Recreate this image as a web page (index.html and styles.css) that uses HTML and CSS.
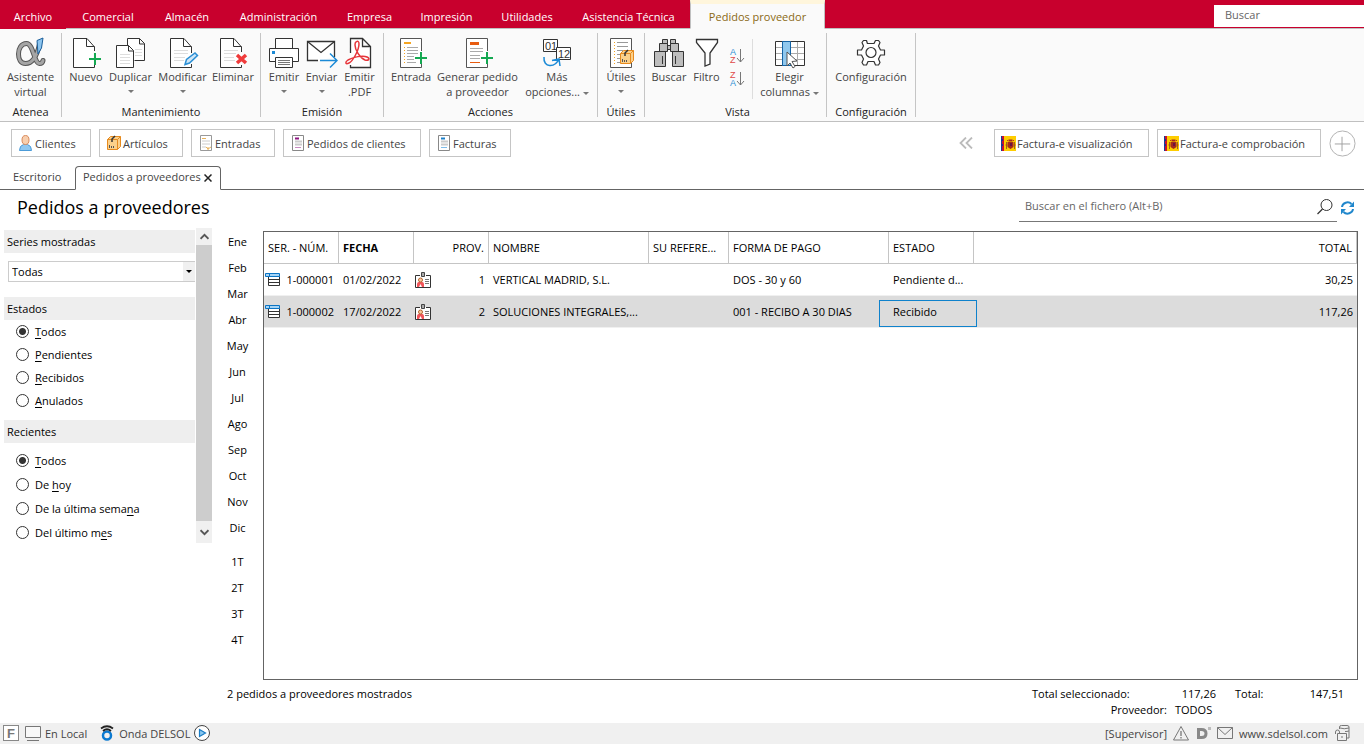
FILE: index.html
```html
<!DOCTYPE html>
<html lang="es">
<head>
<meta charset="utf-8">
<title>Pedidos a proveedores</title>
<link rel="stylesheet" href="styles.css">
</head>
<body>
<svg class="defs" aria-hidden="true">
  <symbol id="plus" viewBox="0 0 12 12"><path d="M6 0v12M0 6h12" stroke="#14a851" stroke-width="2"/></symbol>
  <symbol id="menu-row" viewBox="0 0 16 14">
    <path d="M3.500 3.500h11v9h-11zM3.500 6.500h11M3.500 9.500h11" fill="#fff" stroke="#333"/>
    <path d="M.5 .5h14v3H.5zM4.500 .5v3" fill="#a6d4f5" stroke="#0b74c4"/>
  </symbol>
  <symbol id="card" viewBox="0 0 16 16">
    <path d="M.5 3.500h15v12H.5z" fill="#fff" stroke="#333"/>
    <path d="M5 3h6v1H5z" fill="#fff"/>
    <path d="M6.500 .5h3v4h-3z" fill="#aaa" stroke="#444"/>
    <path d="M2 15v-3q0-1.500 1.500-2h4q1.500 .5 1.500 2v3z" fill="#f0555a"/>
    <circle cx="5.500" cy="8" r="2" fill="#f9c9a0" stroke="#b5652d"/>
    <path d="M4 15l1.500-3 1.500 3" fill="#fff"/>
    <path d="M10 7.500h4M10 9.500h4M10 11.500h4" stroke="#777"/>
  </symbol>
  <symbol id="flag" viewBox="0 0 15 15">
    <path d="M0 0h15v15H0z" fill="#fecd00"/>
    <path d="M0 0h1v15H0z" fill="#123c9c"/><path d="M1 0h2v15H1z" fill="#c8102e"/><path d="M0 3h2v2H0zM0 8h2v2H0z" fill="#203090"/>
    <path d="M5 6h1v7H5zM13 6h1v7h-1z" fill="#9a6a1c"/>
    <path d="M7.500 3.500h4v2h-4zM6.500 6h6v5l-3 2-3-2z" fill="#a52a1c"/>
    <path d="M9 7h2v3H9z" fill="#6a1440"/><path d="M4.500 9h2M12.500 9h2M6 4.500h1M12 4.500h1" stroke="#b3401c"/>
  </symbol>
  <symbol id="box" viewBox="0 0 16 16">
    <path d="M1.500 4.500l3-3h10v10l-3 3h-10z" fill="#fbd08a" stroke="#e68a1e"/>
    <path d="M1.500 4.500h10v10M11.500 4.500l3-3" fill="none" stroke="#e68a1e"/>
    <path d="M6 7V4l3-3" fill="none" stroke="#333" stroke-width="1.500"/>
    <path d="M3.500 10v3M5.500 11v2M7.500 11v2" stroke="#555"/>
  </symbol>
</svg>

<div class="app">
  <header>
    <nav class="menubar">
      <a class="menu menu-file" href="#">Archivo</a><a class="menu" href="#">Comercial</a><a class="menu" href="#">Almacén</a><a class="menu" href="#">Administración</a><a class="menu" href="#">Empresa</a><a class="menu" href="#">Impresión</a><a class="menu" href="#">Utilidades</a><a class="menu" href="#">Asistencia Técnica</a><a class="menu menu-active" href="#">Pedidos proveedor</a>
      <span class="menu menu-rest"></span>
      <input class="global-search" type="text" placeholder="Buscar" aria-label="Buscar">
    </nav>

    <div class="ribbon">
      <section class="group g-atenea">
        <div class="tools">
          <button class="tool">
            <svg class="icon" viewBox="0 0 32 32"><g fill="none" stroke-linecap="round"><path d="M24.500 7C22 19 17 26.500 10.500 26.500C5.500 26.500 3.500 22 3.500 17S6 6.500 11.500 6.500C18.500 6.500 19 26.500 24.500 26.500Q27.500 26.500 28 23.500" stroke="#555" stroke-width="5"/><path d="M24.500 7C22 19 17 26.500 10.500 26.500C5.500 26.500 3.500 22 3.500 17S6 6.500 11.500 6.500C18.500 6.500 19 26.500 24.500 26.500Q27.500 26.500 28 23.500" stroke="#a5a5a5" stroke-width="3"/></g><path d="M22 3.500l6-2.500-1.500 10-3.500 6z" fill="#8cc5ef" stroke="#1b5f9b"/></svg>
            <span>Asistente<br>virtual</span></button>
        </div>
        <h2>Atenea</h2>
      </section>

      <section class="group g-mant">
        <div class="tools">
          <button class="tool">
            <svg class="icon" viewBox="0 0 32 32"><path d="M24.500 14V10l-7.500-8.500H3.500v29h21V27M16.500 1.500V9.500h8" fill="#fff" stroke="#333"/><path d="M23 14h3v13h-3z" fill="#fafafa"/><use href="#plus" x="19" y="16" width="12" height="12"/></svg>
            <span>Nuevo</span></button>
          <button class="tool">
            <svg class="icon" viewBox="0 0 32 32"><path d="M12.500 8V1.500h12l5 5v17h-10M24.500 1.500V7h5" fill="#fff" stroke="#333"/><path d="M1.500 8.500h12l5 5v17h-17zM13.500 8.500V14h5" fill="#fff" stroke="#333"/><path d="M5 17.500h10M5 20.500h10M5 23.500h10M5 26.500h10M20 12.500h7M20 15.500h7M20 18.500h7" stroke="#ddd"/></svg>
            <span>Duplicar</span><i class="caret"></i></button>
          <button class="tool">
            <svg class="icon" viewBox="0 0 32 32"><path d="M24.500 16V10l-7.500-8.500H3.500v29h21V27M16.500 1.500V9.500h8" fill="#fff" stroke="#333"/><path d="M7 13.500h14M7 16.500h14M7 20.500h11M7 23.500h10" stroke="#ddd"/><path d="M18 27.500l1.500-5 8.500-6.500 2.500 2.500-8 7.500z" fill="#cfe6f7" stroke="#2b8fd4" stroke-width="1.500"/></svg>
            <span>Modificar</span><i class="caret"></i></button>
          <button class="tool">
            <svg class="icon" viewBox="0 0 32 32"><path d="M24.500 15V10l-7.500-8.500H3.500v29h21V28M16.500 1.500V9.500h8" fill="#fff" stroke="#333"/><path d="M7 13.500h14M7 16.500h12M7 20.500h10M7 23.500h11" stroke="#ddd"/><path d="M20 18l9 8M29 18l-9 8" stroke="#f03b3b" stroke-width="3.500"/></svg>
            <span>Eliminar</span></button>
        </div>
        <h2>Mantenimiento</h2>
      </section>

      <section class="group g-emi">
        <div class="tools">
          <button class="tool">
            <svg class="icon" viewBox="0 0 32 32"><path d="M7.500 11V1.500h17V11M8 24.500H1.500v-13h29v13H24" fill="#fff" stroke="#333"/><path d="M7.500 20.500h17v10h-17z" fill="#fff" stroke="#333"/><path d="M10 23.500h12M10 25.500h12M10 27.500h12" stroke="#777"/><path d="M4 14h3v3H4z" fill="#1b8ad6"/></svg>
            <span>Emitir</span><i class="caret"></i></button>
          <button class="tool">
            <svg class="icon" viewBox="0 0 32 32"><path d="M12 23.500H1.500v-19h27V20" fill="#fff" stroke="#333" stroke-width="1.300"/><path d="M1.500 4.500L15 15.500 28.500 4.500" fill="none" stroke="#333" stroke-width="1.300"/><path d="M14 23.500h16M24 16.500l7 7-7 7" fill="none" stroke="#1b8ad6" stroke-width="1.500"/></svg>
            <span>Enviar</span><i class="caret"></i></button>
          <button class="tool">
            <svg class="icon" viewBox="0 0 32 32"><path d="M6.500 16V1.500h12l8 8v21h-20V28M18.500 1.500v8h8" fill="#fff" stroke="#333" stroke-width="1.300"/><path d="M12 5q3-2 3 2c0 6-6 17-10 19s-4-1-1-3c5-3 15-5 19-3s1 4-2 3c-5-2-10-10-10-15 0-2 0-2.500 1-3z" fill="#fff" stroke="#e6353a" stroke-width="1.500"/></svg>
            <span>Emitir<br>.PDF</span></button>
        </div>
        <h2>Emisión</h2>
      </section>

      <section class="group g-acc">
        <div class="tools">
          <button class="tool">
            <svg class="icon" viewBox="0 0 32 32"><path d="M26.500 14V1.500h-21v29h21V27" fill="#fff" stroke="#555"/><path d="M9 6h7" stroke="#f5a623" stroke-width="2"/><path d="M12 10.500h11M12 13.500h11M12 16.500h11M12 19.500h7M12 22.500h7M12 25.500h9" stroke="#aaa"/><path d="M9.500 10v16" stroke="#f5a623" stroke-dasharray="1 2"/><use href="#plus" x="20" y="15" width="12" height="12"/></svg>
            <span>Entrada</span></button>
          <button class="tool">
            <svg class="icon" viewBox="0 0 32 32"><path d="M25.500 14V1.500h-21v29h21V27" fill="#fff" stroke="#555"/><path d="M8 6.500h9" stroke="#e85c10" stroke-width="3"/><path d="M8 11.500h13M8 14.500h13M8 18.500h10M8 21.500h10" stroke="#aaa"/><path d="M8 25.500h10" stroke="#e85c10"/><use href="#plus" x="19" y="15" width="12" height="12"/></svg>
            <span>Generar pedido<br>a proveedor</span></button>
          <button class="tool">
            <svg class="icon" viewBox="0 0 32 32"><path d="M2.500 2.500h14v12h-14z" fill="#fff" stroke="#333"/><path d="M15.500 10.500h14v12h-14z" fill="#fff" stroke="#333"/><text x="4" y="13" class="digits">01</text><text x="17" y="21" class="digits">12</text><path d="M3 20c-1 11 11 11 15 2M11 23.500l7-1.500 1 7" fill="none" stroke="#1b8ad6" stroke-width="1.500"/></svg>
            <span>Más<br>opciones... <i class="caret"></i></span></button>
        </div>
        <h2>Acciones</h2>
      </section>

      <section class="group g-utiles">
        <div class="tools">
          <button class="tool">
            <svg class="icon" viewBox="0 0 32 32"><path d="M5.500 1.500h21v29h-21z" fill="#fff" stroke="#555"/><path d="M12 5.500h11M12 9.500h11M12 13.500h6M12 17.500h3M12 21.500h3M12 25.500h3" stroke="#999"/><path d="M9.500 5v22" stroke="#f5a623" stroke-dasharray="1 2"/><use href="#box" x="14" y="12" width="16" height="16"/></svg>
            <span>Útiles</span><i class="caret"></i></button>
        </div>
        <h2>Útiles</h2>
      </section>

      <section class="group g-vista">
        <div class="tools">
          <button class="tool">
            <svg class="icon" viewBox="0 0 32 32"><g fill="#bdbdbd" stroke="#333"><path d="M9.500 2.500h5v4h-5zM17.500 2.500h5v4h-5zM6.500 6.500h8v8h-8zM17.500 6.500h8v8h-8zM14.500 8.500h3v4h-3zM1.500 14.500h11v15h-11zM19.500 14.500h11v15h-11z"/></g><path d="M9.500 19v8M22.500 19v8" stroke="#333"/></svg>
            <span>Buscar</span></button>
          <button class="tool">
            <svg class="icon" viewBox="0 0 32 32"><path d="M5.500 2.500h21v3L19 16v11l-5 2V16L5.500 5.500z" fill="#fff" stroke="#333" stroke-width="1.300"/></svg>
            <span>Filtro</span></button>
          <div class="sorts">
            <button class="sort" aria-label="Orden ascendente"><svg viewBox="0 0 16 18"><text x="1" y="8" class="sort-a">A</text><text x="1" y="16" class="sort-z">Z</text><path d="M11.500 2v13M8 11l3.500 4 3.500-4" fill="none" stroke="#777"/></svg></button>
            <button class="sort" aria-label="Orden descendente"><svg viewBox="0 0 16 18"><text x="1" y="8" class="sort-z">Z</text><text x="1" y="16" class="sort-a">A</text><path d="M11.500 2v13M8 11l3.500 4 3.500-4" fill="none" stroke="#777"/></svg></button>
          </div>
          <button class="tool">
            <svg class="icon" viewBox="0 0 32 32"><path d="M1.500 4.500h29v24h-29z" fill="#fff" stroke="#333"/><path d="M2 10.500h28M2 16.500h28M2 22.500h28M23.500 5v23" stroke="#aaa"/><path d="M8.500 4.500h8v24h-8z" fill="#90c8ee" stroke="#1463a5"/><path d="M13 15l10 9-5 .5 3 5-2 1.500-3-5-3 3z" fill="#fff" stroke="#555"/></svg>
            <span>Elegir<br>columnas <i class="caret"></i></span></button>
        </div>
        <h2>Vista</h2>
      </section>

      <section class="group g-conf">
        <div class="tools">
          <button class="tool">
            <svg class="icon" viewBox="0 0 32 32"><path d="M12.400 6.500L11.500 3.500h-3L7 5.500l1.500 3.500L6.500 13H2.500v5h4l2 4L7 25.500l1.500 2.500h3l1.500-3.500h6l1.500 3.500h3l1.500-2.500-1.500-3.500 2-4h4v-5h-4l-2-4L25 5.500l-1.500-2h-3l-1.500 3z" fill="#fff" stroke="#333" stroke-width="1.200" stroke-linejoin="round"/><circle cx="16" cy="15.500" r="5" fill="#fff" stroke="#333" stroke-width="1.200"/></svg>
            <span>Configuración</span></button>
        </div>
        <h2>Configuración</h2>
      </section>
    </div>
  </header>

  <div class="shortcuts">
    <button class="short s-cli"><svg viewBox="0 0 16 16"><path d="M1.500 15.500q0-5 4-6h4q4 1 4 6z" fill="#8fc7f0" stroke="#4b9bd8"/><ellipse cx="7.500" cy="5" rx="3.500" ry="4.500" fill="#f8cfae" stroke="#d98c5f"/></svg>Clientes</button>
    <button class="short s-art"><svg viewBox="0 0 16 16"><use href="#box"/></svg>Artículos</button>
    <button class="short s-ent"><svg viewBox="0 0 16 16"><path d="M2.500 .5h11v15h-11z" fill="#fff" stroke="#999"/><path d="M4 3.500h4M10 12v3M8 12l2 2 3-2" fill="none" stroke="#e8b25c"/><path d="M4 6h8M4 9h8M4 12h4" stroke="#ccc"/></svg>Entradas</button>
    <button class="short s-ped"><svg viewBox="0 0 16 16"><path d="M2.500 .5h11v15h-11z" fill="#fff" stroke="#888"/><path d="M5 3.500h4" stroke="#8e1480" stroke-width="2"/><path d="M5 6.500h7M5 9.500h7" stroke="#ccc" stroke-width="2"/><path d="M5 12.500h6" stroke="#c98ac2"/></svg>Pedidos de clientes</button>
    <button class="short s-fac"><svg viewBox="0 0 16 16"><path d="M2.500 .5h11v15h-11z" fill="#fff" stroke="#888"/><path d="M5 3.500h4" stroke="#1b7fc8" stroke-width="2"/><path d="M5 6.500h7M5 9.500h7" stroke="#ccc" stroke-width="2"/><path d="M5 12.500h6" stroke="#7fbdea"/></svg>Facturas</button>
    <button class="plain back" aria-label="Contraer"><svg viewBox="0 0 14 12"><path d="M7 .5L1.500 6 7 11.500M13 .5L7.500 6l5.500 5.500" fill="none" stroke="#bbb" stroke-width="1.800"/></svg></button>
    <button class="short s-vis"><svg viewBox="0 0 15 15"><use href="#flag"/></svg>Factura-e visualización</button>
    <button class="short s-com"><svg viewBox="0 0 15 15"><use href="#flag"/></svg>Factura-e comprobación</button>
    <button class="plain add" aria-label="Añadir"><svg viewBox="0 0 28 28"><circle cx="14" cy="14" r="13" fill="none" stroke="#b0b0b0"/><path d="M6 14.500h16M13.500 7v15" stroke="#a0a0a0"/></svg></button>
  </div>

  <nav class="tabs">
    <a class="tab" href="#">Escritorio</a>
    <div class="tab tab-active"><a href="#">Pedidos a proveedores</a><button class="plain close" aria-label="Cerrar"><svg viewBox="0 0 8 8"><path d="M.5 .5l7 7M7.500 .5l-7 7" stroke="#222" stroke-width="1.500"/></svg></button></div>
  </nav>

  <div class="title-row">
    <h1>Pedidos a proveedores</h1>
    <div class="file-search">
      <input type="text" placeholder="Buscar en el fichero (Alt+B)" aria-label="Buscar en el fichero">
      <button class="plain lens" aria-label="Buscar"><svg viewBox="0 0 16 16"><circle cx="9.500" cy="6" r="5.500" fill="none" stroke="#333"/><path d="M5.500 10L.5 15" stroke="#333" stroke-width="1.300"/></svg></button>
    </div>
    <button class="plain refresh" aria-label="Actualizar"><svg viewBox="0 0 14 14"><path d="M1.500 6a5.500 5 0 0 1 9.500-3M12.500 8a5.500 5 0 0 1-9.500 3" fill="none" stroke="#2087cc" stroke-width="2"/><path d="M13.500 .5v5.500h-5zM.5 13.500V8h5z" fill="#2087cc"/></svg></button>
  </div>

  <main class="main">
    <aside class="side">
      <div class="filters">
        <h3><label for="serie">Series mostradas</label></h3>
        <div class="combo"><select id="serie"><option>Todas</option></select><i></i></div>
        <h3>Estados</h3>
        <div class="radios">
          <label><input type="radio" name="estado" checked><span><u>T</u>odos</span></label>
          <label><input type="radio" name="estado"><span><u>P</u>endientes</span></label>
          <label><input type="radio" name="estado"><span><u>R</u>ecibidos</span></label>
          <label><input type="radio" name="estado"><span><u>A</u>nulados</span></label>
        </div>
        <h3>Recientes</h3>
        <div class="radios radios-wide">
          <label><input type="radio" name="reciente" checked><span><u>T</u>odos</span></label>
          <label><input type="radio" name="reciente"><span>De <u>h</u>oy</span></label>
          <label><input type="radio" name="reciente"><span>De la última sema<u>n</u>a</span></label>
          <label><input type="radio" name="reciente"><span>Del último m<u>e</u>s</span></label>
        </div>
      </div>
      <div class="scrollbar">
        <button class="plain" aria-label="Subir"><svg viewBox="0 0 8 6"><path d="M.5 5L4 1.500 7.500 5" fill="none" stroke="#555" stroke-width="1.600"/></svg></button>
        <div class="thumb"></div>
        <button class="plain" aria-label="Bajar"><svg viewBox="0 0 8 6"><path d="M.5 1L4 4.500 7.500 1" fill="none" stroke="#555" stroke-width="1.600"/></svg></button>
      </div>
    </aside>

    <nav class="months">
      <a href="#">Ene</a><a href="#">Feb</a><a href="#">Mar</a><a href="#">Abr</a><a href="#">May</a><a href="#">Jun</a><a href="#">Jul</a><a href="#">Ago</a><a href="#">Sep</a><a href="#">Oct</a><a href="#">Nov</a><a href="#">Dic</a>
      <a class="quarter" href="#">1T</a><a href="#">2T</a><a href="#">3T</a><a href="#">4T</a>
    </nav>

    <div class="grid">
      <table>
        <colgroup><col class="c-num"><col class="c-date"><col class="c-prov"><col class="c-name"><col class="c-ref"><col class="c-pay"><col class="c-state"><col></colgroup>
        <thead><tr><th>SER. - NÚM.</th><th class="bold">FECHA</th><th class="right">PROV.</th><th>NOMBRE</th><th>SU REFERE...</th><th>FORMA DE PAGO</th><th>ESTADO</th><th class="right">TOTAL</th></tr></thead>
        <tbody>
          <tr><td class="num"><div><svg viewBox="0 0 16 14"><use href="#menu-row"/></svg>1-000001</div></td><td>01/02/2022</td><td class="prov"><div><svg viewBox="0 0 16 16"><use href="#card"/></svg>1</div></td><td>VERTICAL MADRID, S.L.</td><td></td><td>DOS - 30 y 60</td><td>Pendiente d...</td><td class="right">30,25</td></tr>
          <tr class="selected"><td class="num"><div><svg viewBox="0 0 16 14"><use href="#menu-row"/></svg>1-000002</div></td><td>17/02/2022</td><td class="prov"><div><svg viewBox="0 0 16 16"><use href="#card"/></svg>2</div></td><td>SOLUCIONES INTEGRALES,...</td><td></td><td>001 - RECIBO A 30 DIAS</td><td class="focus">Recibido</td><td class="right">117,26</td></tr>
        </tbody>
      </table>
    </div>
  </main>

  <section class="summary">
    <p>2 pedidos a proveedores mostrados</p>
    <dl><dt>Total seleccionado:</dt><dd>117,26</dd><dt>Total:</dt><dd>147,51</dd><dt class="prov-label">Proveedor:</dt><dd class="prov-value">TODOS</dd></dl>
  </section>

  <footer class="status">
    <div class="status-left">
      <span class="f-box">F</span>
      <svg class="pc" viewBox="0 0 16 16"><path d="M.5 1.500h15v11H.5zM2 15.500h12" fill="#f8f8f8" stroke="#777"/></svg>
      <span class="local">En Local</span>
      <svg class="wave" viewBox="0 0 14 16"><circle cx="7" cy="10.500" r="4" fill="none" stroke="#0b7ad1" stroke-width="2.500"/><path d="M1 3.500Q7-1 13 3.500M3 6q4-3.500 8 0" fill="none" stroke="#222" stroke-width="1.800"/></svg>
      <span>Onda DELSOL</span>
      <button class="plain play" aria-label="Reproducir"><svg viewBox="0 0 16 16"><circle cx="8" cy="8" r="7.500" fill="#fff" stroke="#444"/><path d="M5.500 4.500l6 3.500-6 3.500z" fill="#8cc8f0" stroke="#1a7cc4" stroke-width="1.200"/></svg></button>
    </div>
    <div class="status-right">
      <span>[Supervisor]</span>
      <svg viewBox="0 0 16 15"><path d="M8 1l7.500 13.500H.5z" fill="none" stroke="#777"/><path d="M8 5.500v5M8 11.500v1.500" stroke="#777" stroke-width="1.300"/></svg>
      <svg viewBox="0 0 16 16"><path d="M2 4.500h4.500q4.500 0 4.500 4t-4.500 4H3.500V5" fill="none" stroke="#888" stroke-width="3"/><path d="M13 2h3v3h-3z" fill="#bbb"/></svg>
      <svg viewBox="0 0 16 15"><path d="M.5 2h15v11H.5zM.5 2L8 9l7.500-7" fill="none" stroke="#777"/></svg>
      <a href="#">www.sdelsol.com</a>
      <svg viewBox="0 0 16 16"><path d="M5.500 4V2q0-1.500 2-1.500h5.500q2 0 2 1.500v11h-2.500M6 3q4 1.500 9 0M11 6.500q2 0 4-.5" fill="none" stroke="#777"/><path d="M3.500 8.500h9v7h-9zM1.500 9V7q0-2 2-2t2 2v1.500M8 11v2" fill="none" stroke="#777"/></svg>
    </div>
  </footer>
</div>
</body>
</html>
```
FILE: styles.css
```css
* { box-sizing: border-box; }
body { margin: 0; font: 11px/15px "Open Sans", "Noto Sans", sans-serif; color: #000; background: #fff; }
button, input, select { font: inherit; color: inherit; }
button { cursor: pointer; }
a { color: inherit; text-decoration: none; }
h1, h2, h3, p, dl, dd { margin: 0; font-weight: 400; font-size: inherit; }
svg { flex: none; display: block; }
.defs { display: none; }
.app { display: flex; flex-direction: column; height: 100vh; overflow: hidden; }
.plain { border: 0; padding: 0; background: none; display: flex; align-items: center; justify-content: center; }

.menubar { display: grid; grid-template-columns: 66px 84px 74px 109px 73px 81px 80px 123px 135px 1fr 150px; height: 29px; background: #c8002d; color: #fff; }
.menu { border-bottom: 1px solid #c0c0c0; padding-top: 9px; text-align: center; white-space: nowrap; }
.menu-file { border-bottom-color: #c8002d; }
.menu-rest { grid-column: 10 / 12; grid-row: 1; }
.menu-active { background: #fafafa; color: #8a6914; border: 1px solid #c0c0c0; border-bottom-color: #fafafa; border-top: 4px solid #fff6dc; padding-top: 5px; }
.global-search { grid-column: 11; grid-row: 1; height: 22px; margin-top: 5px; border: 0; padding: 0 11px 3px; background: #fff; color: #444; min-width: 0; border-radius: 0; }
::placeholder { color: #666; opacity: 1; }

.ribbon { display: flex; height: 93px; background: #fafafa; border-bottom: 1px solid #c0c0c0; color: #444; }
.group { display: flex; flex-direction: column; justify-content: space-between; margin: 4px 0; padding: 4px 4px 0; border-right: 1px solid #c5c5c5; }
.group h2 { color: #222; text-align: center; white-space: nowrap; line-height: 10px; }
.tools { display: grid; justify-content: center; }
.g-atenea { width: 62px; padding-left: 0; padding-right: 0; }
.g-atenea .tools { grid-template-columns: 60px; }
.g-mant .tools { grid-template-columns: 40px 49px 55px 46px; }
.g-emi .tools { grid-template-columns: 38px 37px 39px; }
.g-acc .tools { grid-template-columns: 46px 87px 72px; }
.g-utiles .tools { grid-template-columns: 38px; }
.g-vista { padding-right: 0; }
.g-vista .tools { grid-template-columns: 40px 35px 29px 73px; }
.g-conf .tools { grid-template-columns: 80px; }
.tool { display: flex; flex-direction: column; align-items: center; border: 0; padding: 0; background: none; white-space: nowrap; min-width: 0; }
.icon { width: 32px; height: 32px; }
.caret { display: inline-block; border: 3px solid transparent; border-top-color: #777; border-bottom: 0; vertical-align: middle; }
.tool > .caret { margin-top: 6px; }
.digits { font: 11px "Liberation Sans", sans-serif; fill: #333; }
.sorts { display: flex; flex-direction: column; gap: 5px; margin-top: 2px; padding: 8px 2px 0 0; border-right: 1px solid #ddd; align-items: center; height: 60px; }
.sort { border: 0; padding: 0; background: none; }
.sort svg { width: 16px; height: 18px; }
.sort-a, .sort-z { font: 9px "Liberation Sans", sans-serif; fill: #2b8fd4; }
.sort-z { fill: #e04848; }

.shortcuts { display: flex; gap: 8px; padding: 7px 8px 9px 11px; color: #444; }
.short { display: flex; align-items: center; gap: 1px; height: 28px; padding: 0 0 0 6px; border: 1px solid #c5c5c5; background: #fff; white-space: nowrap; }
.short svg { width: 16px; height: 16px; }
.s-cli { width: 80px; } .s-art { width: 84px; } .s-ent { width: 84px; } .s-ped { width: 138px; } .s-fac { width: 82px; }
.s-vis { width: 155px; } .s-com { width: 164px; }
.s-vis svg, .s-com svg { width: 15px; height: 15px; }
.back { margin-left: auto; margin-right: 13px; }
.back svg { width: 14px; height: 12px; }
.add svg { width: 27px; height: 27px; }

.tabs { display: flex; height: 24px; color: #444; }
.tab { width: 75px; padding: 3px 0 0 13px; border-bottom: 1px solid #646464; }
.tab-active { display: flex; align-items: flex-start; gap: 3px; width: 146px; padding: 2px 0 0 7px; border: 1px solid #646464; border-bottom-color: #fff; border-radius: 4px 4px 0 0; white-space: nowrap; }
.tabs::after { content: ""; flex: 1; border-bottom: 1px solid #646464; }
.close { height: 17px; }
.close svg { width: 8px; height: 8px; }

.title-row { display: flex; height: 38px; padding: 2px 9px 0 17px; }
h1 { font-size: 18px; line-height: 30px; }
.file-search { display: flex; width: 318px; height: 30px; margin-left: auto; border-bottom: 1px solid #777; }
.file-search input { flex: 1; min-width: 0; border: 0; padding: 0 6px 2px; background: none; }
.lens { width: 24px; }
.lens svg { width: 16px; height: 16px; }
.refresh { height: 32px; width: 18px; justify-content: flex-end; }
.refresh svg { width: 15px; height: 14px; }

.main { display: flex; flex: 1; min-height: 0; padding-right: 6px; }
.side { display: flex; width: 212px; height: 315px; }
.filters { flex: 1; margin-left: 4px; padding-top: 2px; }
.filters h3 { height: 23px; padding: 4px 3px; margin-right: 1px; background: #eee; }
.combo { display: grid; grid-template-columns: 1fr 12px; margin: 8px 1px 15px 4px; height: 21px; border: 1px solid #ccc; border-right: 0; }
.combo select { appearance: none; border: 0; background: #fff; padding: 0 3px; border-radius: 0; }
.combo i { background: #f0f0f0; display: grid; place-items: center; }
.combo i::after { content: ""; border: 3px solid transparent; border-top-color: #000; border-bottom: 0; }
.radios { padding: 0 0 8px 12px; }
.radios label { display: flex; align-items: center; gap: 6px; height: 23px; }
.radios-wide { padding-top: 5px; }
.radios-wide label { height: 24px; }
.radios input { appearance: none; width: 13px; height: 13px; margin: 0; border: 1px solid #333; border-radius: 50%; background: #fff; }
.radios input:checked { background: radial-gradient(circle, #333 3px, #fff 4px); }
u { text-underline-offset: 2px; }
.scrollbar { display: flex; flex-direction: column; width: 16px; background: #f0f0f0; }
.scrollbar button { height: 17px; }
.scrollbar button:last-child { height: 22px; }
.scrollbar svg { width: 9px; height: 7px; }
.thumb { flex: 1; background: #cdcdcd; }
.months { display: flex; flex-direction: column; width: 51px; padding-top: 1px; text-align: center; }
.months a { line-height: 26px; }
.months .quarter { margin-top: 8px; }

.grid { flex: 1; min-width: 0; margin-top: 3px; border: 1px solid #646464; }
table { width: 100%; table-layout: fixed; border-collapse: separate; border-spacing: 0; }
.c-num, .c-date, .c-prov { width: 75px; } .c-name, .c-pay { width: 160px; } .c-ref { width: 80px; } .c-state { width: 85px; }
th, td { height: 32px; padding: 0 4px; text-align: left; font-weight: 400; white-space: nowrap; }
th { border-right: 1px solid #c5c5c5; border-bottom: 1px solid #c5c5c5; }
td { border-bottom: 1px solid #f0f0f0; }
.bold { font-weight: 700; }
.right { text-align: right; }
.selected td { background: #dcdcdc; }
.num { padding: 0 5px 0 1px; }
.num div, .prov div { display: flex; align-items: center; justify-content: space-between; }
.num svg { width: 16px; height: 14px; }
.prov { padding: 0 4px 0 1px; }
.prov svg { width: 16px; height: 16px; }
.focus { position: relative; }
.focus::after { content: ""; position: absolute; left: -10px; right: -3px; top: 4px; bottom: 0; border: 1px solid #0f82cc; }

.summary { display: flex; justify-content: space-between; height: 43px; padding: 6px 20px 0 227px; }
.summary dl { display: grid; grid-template-columns: 135px 49px 49px 79px; grid-auto-rows: 16px; }
.summary dl dt:nth-of-type(2) { padding-left: 19px; }
.summary dt { white-space: nowrap; }
.summary dd { text-align: right; }
.summary .prov-label { text-align: right; }
.summary .prov-value { text-align: left; padding-left: 8px; }

.status { display: flex; justify-content: space-between; height: 21px; padding: 0 14px 1px 3px; background: #f0f0f0; color: #444; }
.status-left, .status-right { display: flex; align-items: center; gap: 6px; }
.status-left { gap: 4px; }
.status svg { width: 16px; height: 16px; }
.status-left .pc { margin-left: 2px; }
.f-box { width: 16px; height: 16px; border: 1px solid #888; color: #777; background: #fff; font: 700 13px/15px "Liberation Sans", sans-serif; text-align: center; }
.local { margin-right: 8px; }
```
